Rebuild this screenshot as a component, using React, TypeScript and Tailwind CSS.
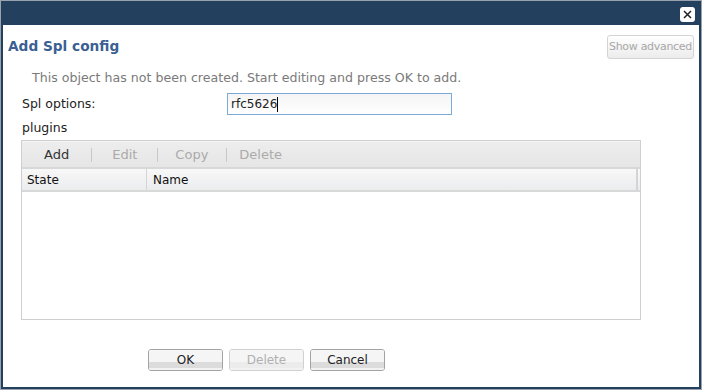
import React from 'react';

const font = { fontFamily: '"DejaVu Sans", Verdana, sans-serif' };

function ToolbarButton({ label, enabled }: { label: string; enabled?: boolean }) {
  return <span className={enabled ? 'text-[#333]' : 'text-[#aaa]'}>{label}</span>;
}

function Separator() {
  return <span className="w-px h-[14px] bg-[#c8c8c8]" />;
}

function FooterButton({ label, disabled }: { label: string; disabled?: boolean }) {
  return (
    <button
      type="button"
      className={`relative w-[75px] h-[22px] rounded-[3px] border overflow-hidden text-[12px] leading-none ${
        disabled ? 'border-[#d0d0d0] text-[#b0b0b0]' : 'border-[#a3a3a3] text-[#222]'
      }`}
    >
      <span className="absolute inset-0 flex flex-col">
        <span className="flex-1 bg-[#f5f5f5]" />
        <span className={`h-[6px] ${disabled ? 'bg-[#ececec]' : 'bg-[#dcdcdc]'}`} />
        <span className="h-[2px] bg-[#f2f2f2]" />
      </span>
      <span className="relative">{label}</span>
    </button>
  );
}

export default function App() {
  return (
    <div className="w-[702px] h-[390px] bg-[#9aa3ad] pt-px pl-px overflow-hidden" style={font}>
      <div className="w-[700px] h-[388px] bg-[#24405f] flex flex-col px-[2px] pb-[2px]">
        <div className="h-[24px] shrink-0 flex items-center justify-end pr-[4px]">
          <div className="w-[15px] h-[15px] bg-white rounded-[3px] flex items-center justify-center mt-[2px]">
            <svg width="11" height="11" viewBox="0 0 11 11">
              <path d="M2 2 L9 9 M9 2 L2 9" stroke="#222" strokeWidth="1.5" />
            </svg>
          </div>
        </div>
        <div className="flex-1 bg-white flex flex-col">
          <div className="flex justify-between items-start pt-[10px] pl-[5px] pr-[5px]">
            <h1 className="text-[13.7px] font-bold text-[#3b5f92] mt-[1px]">Add Spl config</h1>
            <button
              type="button"
              className="w-[87px] h-[24px] rounded-[3px] border border-[#d4d4d4] bg-gradient-to-b from-white to-[#ececec] text-[11px] text-[#a8a8a8] tracking-[-0.3px]"
            >
              Show advanced
            </button>
          </div>
          <p className="pl-[29px] mt-[10px] text-[12.6px] text-[#7a7a7a] h-[18px] leading-[18px]">
            This object has not been created. Start editing and press OK to add.
          </p>
          <div className="flex items-center mt-[6px] pl-[19px] h-[22px]">
            <span className="w-[205px] text-[12.5px] text-[#222]">Spl options:</span>
            <div className="w-[225px] h-[22px] border border-[#7ba9d9] bg-gradient-to-b from-[#f4f4f4] to-white flex items-center pl-[3px] text-[12px] text-[#222]">
              rfc5626<span className="w-px h-[15px] bg-black" />
            </div>
          </div>
          <div className="pl-[19px] mt-[5px] text-[12.5px] text-[#222] h-[16px] leading-[16px]">plugins</div>
          <div className="ml-[18px] mt-[4px] w-[620px] h-[180px] border border-[#cfcfcf] flex flex-col">
            <div className="h-[26px] shrink-0 bg-gradient-to-b from-[#ededed] to-[#e6e6e6] border-t border-[#f5f5f5] flex items-center text-[13px] pl-[22px]">
              <ToolbarButton label="Add" enabled />
              <span className="w-[22px]" />
              <Separator />
              <span className="w-[20px]" />
              <ToolbarButton label="Edit" />
              <span className="w-[20px]" />
              <Separator />
              <span className="w-[17px]" />
              <ToolbarButton label="Copy" />
              <span className="w-[18px]" />
              <Separator />
              <span className="w-[12px]" />
              <ToolbarButton label="Delete" />
            </div>
            <div className="h-[25px] shrink-0 flex border-t-2 border-b-2 border-[#d8d8d8] bg-gradient-to-b from-[#f8f8f8] to-[#ebecee] text-[12px] text-[#111]">
              <div className="w-[125px] border-r border-[#d4d4d4] flex items-center pl-[5px]">State</div>
              <div className="flex-1 border-r-2 border-[#d4d4d4] flex items-center pl-[6px] mr-[2px]">Name</div>
            </div>
            <div className="flex-1 bg-white" />
          </div>
          <div className="flex gap-[6px] pl-[145px] mt-[29px]">
            <FooterButton label="OK" />
            <FooterButton label="Delete" disabled />
            <FooterButton label="Cancel" />
          </div>
        </div>
      </div>
    </div>
  );
}
